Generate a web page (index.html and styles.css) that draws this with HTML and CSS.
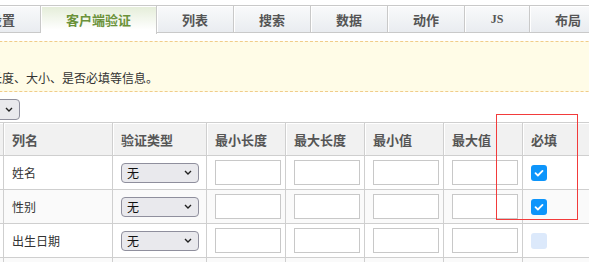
FILE: index.html
```html
<!DOCTYPE html>
<html lang="zh-CN">
<head>
<meta charset="utf-8">
<title>客户端验证</title>
<link rel="stylesheet" href="styles.css">
</head>
<body>
<div class="page">
  <div class="tabs">
    <div class="tab">基本</div>
    <div class="tab">设置</div>
    <div class="tab active">客户端验证</div>
    <div class="tab">列表</div>
    <div class="tab">搜索</div>
    <div class="tab">数据</div>
    <div class="tab">动作</div>
    <div class="tab js">JS</div>
    <div class="tab">布局</div>
  </div>
  <div class="notice">
    <p>提示：</p>
    <p>设置列的验证类型、长度、大小、是否必填等信息。</p>
  </div>
  <div class="toolbar">
    <span class="sel wide"><span class="sel-text">全部</span><svg class="chev" width="8" height="5" viewBox="0 0 8 5"><path d="M1 1l3 3 3-3" fill="none" stroke="#222" stroke-width="1.4"/></svg></span>
  </div>
  <table class="grid">
    <colgroup>
      <col class="c0"><col class="c1"><col class="c2"><col class="c3"><col class="c3"><col class="c3"><col class="c3"><col class="c4">
    </colgroup>
    <thead>
      <tr><th>序号</th><th>列名</th><th>验证类型</th><th>最小长度</th><th>最大长度</th><th>最小值</th><th>最大值</th><th>必填</th></tr>
    </thead>
    <tbody>
      <tr>
        <td>1</td><td>姓名</td>
        <td><span class="sel"><span class="sel-text">无</span><svg class="chev" width="8" height="5" viewBox="0 0 8 5"><path d="M1 1l3 3 3-3" fill="none" stroke="#222" stroke-width="1.4"/></svg></span></td>
        <td><span class="box"></span></td><td><span class="box"></span></td><td><span class="box"></span></td><td><span class="box"></span></td>
        <td><span class="check on"><svg width="16" height="16" viewBox="0 0 16 16"><path d="M4.5 8.2l2.4 2.3 4.6-4.6" fill="none" stroke="#fff" stroke-width="1.8" stroke-linecap="round" stroke-linejoin="round"/></svg></span></td>
      </tr>
      <tr class="alt">
        <td>2</td><td>性别</td>
        <td><span class="sel"><span class="sel-text">无</span><svg class="chev" width="8" height="5" viewBox="0 0 8 5"><path d="M1 1l3 3 3-3" fill="none" stroke="#222" stroke-width="1.4"/></svg></span></td>
        <td><span class="box"></span></td><td><span class="box"></span></td><td><span class="box"></span></td><td><span class="box"></span></td>
        <td><span class="check on"><svg width="16" height="16" viewBox="0 0 16 16"><path d="M4.5 8.2l2.4 2.3 4.6-4.6" fill="none" stroke="#fff" stroke-width="1.8" stroke-linecap="round" stroke-linejoin="round"/></svg></span></td>
      </tr>
      <tr>
        <td>3</td><td>出生日期</td>
        <td><span class="sel"><span class="sel-text">无</span><svg class="chev" width="8" height="5" viewBox="0 0 8 5"><path d="M1 1l3 3 3-3" fill="none" stroke="#222" stroke-width="1.4"/></svg></span></td>
        <td><span class="box"></span></td><td><span class="box"></span></td><td><span class="box"></span></td><td><span class="box"></span></td>
        <td><span class="check off"></span></td>
      </tr>
      <tr class="alt">
        <td>4</td><td>备注</td><td></td><td></td><td></td><td></td><td></td><td></td>
      </tr>
    </tbody>
  </table>
  <div class="highlight"></div>
</div>
</body>
</html>
```

FILE: styles.css
```css
html, body {
  margin: 0;
  padding: 0;
  background: #fff;
  overflow: hidden;
}
body {
  font-family: "Noto Sans CJK SC", "Noto Sans", "Liberation Sans", sans-serif;
  font-size: 12px;
  color: #333;
}
.page {
  position: relative;
  width: 900px;
  margin-left: -126px;
  padding-top: 5px;
}
.tabs {
  display: flex;
  padding-left: 13px;
  height: 28px;
}
.tab {
  box-sizing: border-box;
  width: 77px;
  height: 28px;
  border-top: 1px solid #c9c9c9;
  border-bottom: 1px solid #c9c9c9;
  border-right: 1px solid #c9c9c9;
  background: linear-gradient(#f9fafb, #e9ecf0);
  box-shadow: inset 1px 1px 0 #fff;
  font-size: 13px;
  font-weight: bold;
  color: #555;
  display: flex;
  align-items: center;
  justify-content: center;
}
.tab:first-child {
  border-left: 1px solid #c9c9c9;
}
.tab.active {
  width: 116px;
  height: 29px;
  border-bottom: none;
  background: linear-gradient(#e4edd8, #ffffff 85%);
  color: #6b923a;
  padding-bottom: 1px;
}
.tab.js {
  width: 65px;
  font-family: "Liberation Serif", serif;
  font-size: 12px;
}
.notice {
  margin-top: 8px;
  background: #fffce7;
  border-top: 1px dashed #f0cc8a;
  border-bottom: 1px dashed #f0cc8a;
  padding: 6px 8px 3px;
  line-height: 20px;
  font-size: 12px;
  color: #333;
}
.notice p {
  margin: 0;
}
.toolbar {
  margin-top: 7px;
  padding-left: 66px;
  height: 21px;
  display: flex;
}
.sel {
  box-sizing: border-box;
  display: inline-flex;
  align-items: center;
  justify-content: space-between;
  width: 78px;
  height: 20px;
  padding: 0 6px 0 5px;
  background: #e9e9ed;
  border: 1px solid #8f8f9d;
  border-radius: 4px;
  font-size: 12px;
  color: #111;
  vertical-align: middle;
}
.sel.wide {
  width: 80px;
  height: 21px;
}
.chev {
  display: block;
}
.grid {
  margin-top: 2px;
  margin-left: 8px;
  border-collapse: collapse;
  table-layout: fixed;
  width: 720px;
}
.c0 { width: 121px; }
.c1 { width: 109px; }
.c2 { width: 94px; }
.c3 { width: 79px; }
.c4 { width: 80px; }
.grid th, .grid td {
  border: 1px solid #cfcfcf;
  padding: 0 8px;
  text-align: left;
  white-space: nowrap;
  overflow: hidden;
}
.grid th {
  height: 32px;
  background: #f1f1f1;
  box-shadow: inset 1px 1px 0 #fff;
  font-size: 13px;
  font-weight: bold;
  color: #555;
}
.grid td {
  height: 33px;
  font-size: 12px;
  color: #333;
}
.grid tr.alt td {
  background: #fafafa;
}
.box {
  box-sizing: border-box;
  display: block;
  width: 66px;
  height: 25px;
  border: 1px solid #c8c8c8;
  background: #fff;
}
.check {
  display: block;
  width: 16px;
  height: 16px;
  border-radius: 3px;
}
.check svg {
  display: block;
}
.check.on {
  background: #0d95fb;
}
.check.off {
  background: #dce9fb;
}
.highlight {
  position: absolute;
  left: 622px;
  top: 114px;
  width: 80px;
  height: 104px;
  border: 1px solid #f23b3b;
}
```
